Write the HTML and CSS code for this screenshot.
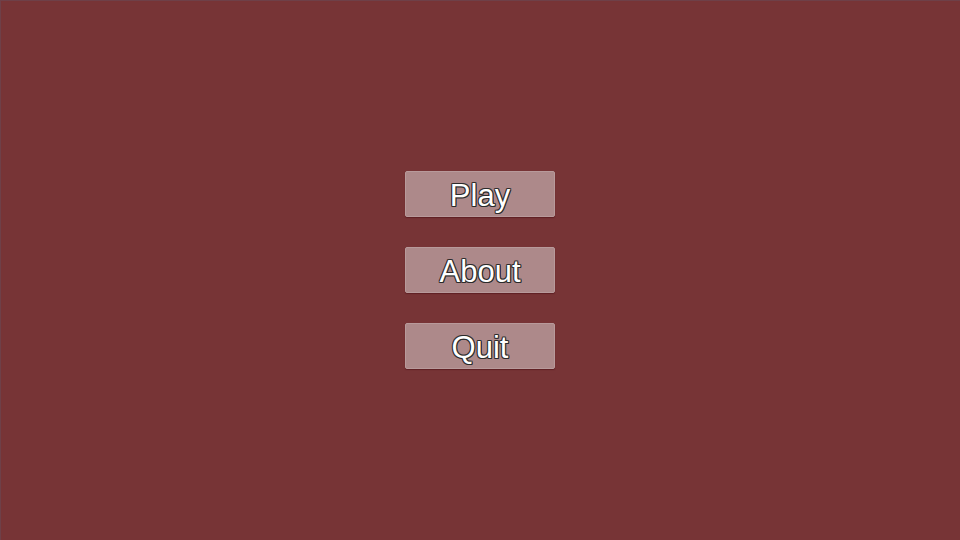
FILE: index.html
```html
<!DOCTYPE html>
<html>
<head>
<meta charset="utf-8">
<link rel="stylesheet" href="styles.css">
</head>
<body>
<main class="screen">
  <nav class="menu">
    <button class="btn">Play</button>
    <button class="btn">About</button>
    <button class="btn">Quit</button>
  </nav>
</main>
</body>
</html>
```
FILE: styles.css
```css
html, body {
  margin: 0;
  padding: 0;
  width: 960px;
  height: 540px;
  overflow: hidden;
}
.screen {
  width: 960px;
  height: 540px;
  box-sizing: border-box;
  background: #773436;
  box-shadow: inset 1px 1px 0 #6e4048;
  display: flex;
  justify-content: center;
  align-items: flex-start;
}
.menu {
  margin-top: 171px;
  display: flex;
  flex-direction: column;
  gap: 30px;
}
.btn {
  box-sizing: border-box;
  width: 150px;
  height: 46px;
  margin: 0;
  padding: 3px 0 0 0;
  border: 1px solid #b89a9b;
  border-radius: 2px;
  background: #ad898a;
  color: #ffffff;
  font-family: "Liberation Sans", Arial, sans-serif;
  font-size: 31px;
  line-height: 41px;
  text-align: center;
  overflow: hidden;
  text-shadow: 1px 1px 0 #2a2a2a, -1px -1px 0 rgba(40,40,40,0.75), 1px -1px 0 rgba(40,40,40,0.75), -1px 1px 0 rgba(40,40,40,0.8), 0 1px 0 #2a2a2a, 1px 0 0 #2a2a2a, 0 -1px 0 rgba(40,40,40,0.75), -1px 0 0 rgba(40,40,40,0.75);
  box-shadow: 0 1px 1px rgba(80, 20, 25, 0.6);
}
```
